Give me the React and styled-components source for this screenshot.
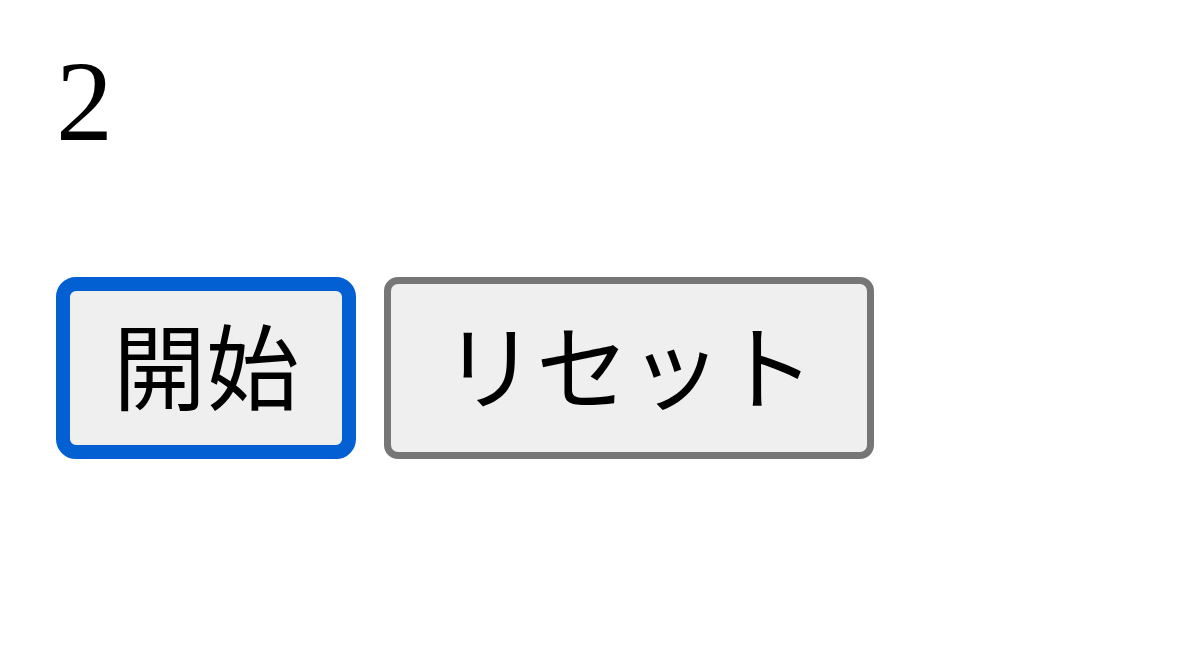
import React, { useState } from 'react';
import styled, { createGlobalStyle } from 'styled-components';

const GlobalStyle = createGlobalStyle`
	body {
		margin: 0;
		background: #ffffff;
	}
`;

const App = () => {
	const [count] = useState(2);

	return (
		<>
			<GlobalStyle />
			<Wrapper>
				<Counter>{count}</Counter>
				<ButtonRow>
					<Button focused>開始</Button>
					<Button>リセット</Button>
				</ButtonRow>
			</Wrapper>
		</>
	);
};

export default App;

const Wrapper = styled.div`
	display: flex;
	flex-direction: column;
	align-items: flex-start;
	padding: 45px 56px;
`;

const Counter = styled.div`
	font-family: "Liberation Serif", "Times New Roman", serif;
	font-size: 114px;
	line-height: 114px;
	color: #000;
`;

const ButtonRow = styled.div`
	display: flex;
	gap: 28px;
	margin-top: 118px;
`;

const Button = styled.button`
	box-sizing: border-box;
	display: inline-flex;
	align-items: center;
	justify-content: center;
	height: 182px;
	padding: 0 ${({ focused }) => (focused ? 43 : 52)}px 12px;
	border: ${({ focused }) => (focused ? '14px solid #0360d2' : '7px solid #767676')};
	border-radius: ${({ focused }) => (focused ? 20 : 14)}px;
	background: #efefef;
	font-family: "Noto Sans CJK JP", "Noto Sans", sans-serif;
	font-size: 93px;
	line-height: 1;
	color: #000;
	cursor: pointer;
`;
